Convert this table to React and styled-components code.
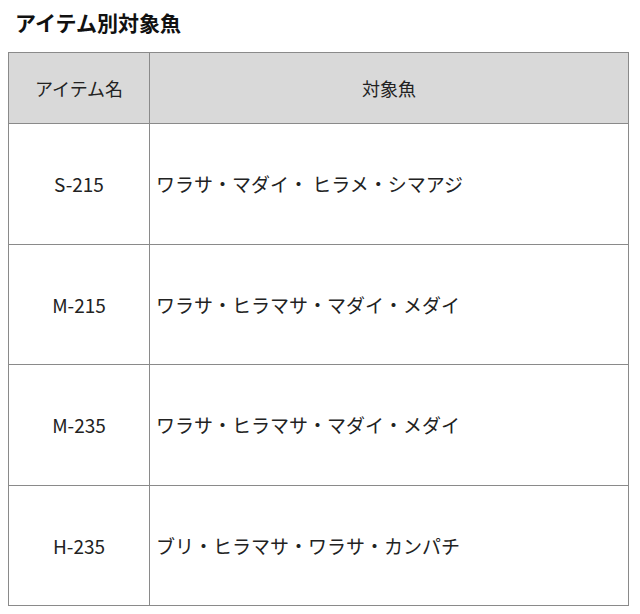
import React from "react";
import styled, { createGlobalStyle } from "styled-components";

const GlobalStyle = createGlobalStyle`
  body {
    margin: 0;
    background: #ffffff;
    font-family: "Noto Sans CJK JP", "Noto Sans", sans-serif;
    color: #222222;
  }
`;

const Page = styled.div`
  width: 640px;
  padding: 7px 11px 0 8px;
  box-sizing: border-box;
`;

const Title = styled.h2`
  margin: 0 0 15px 7px;
  font-size: 21px;
  font-weight: 700;
  line-height: 30px;
  color: #111111;
`;

const Table = styled.table`
  width: 621px;
  border-collapse: collapse;
  table-layout: fixed;
  border: 1px solid #8a8a8a;
`;

const HeadCell = styled.th`
  height: 70px;
  padding: 0;
  background: #d9d9d9;
  border: 1px solid #8a8a8a;
  font-size: 18px;
  font-weight: 400;
  text-align: center;
  color: #222222;
`;

const Cell = styled.td`
  height: 119.5px;
  padding: ${(p) => (p.$left ? "0 0 0 6px" : "0")};
  border: 1px solid #8a8a8a;
  font-size: 19px;
  text-align: ${(p) => (p.$left ? "left" : "center")};
  vertical-align: middle;
  white-space: nowrap;
`;

const rows = [
  { item: "S-215", fish: "ワラサ・マダイ・ ヒラメ・シマアジ" },
  { item: "M-215", fish: "ワラサ・ヒラマサ・マダイ・メダイ" },
  { item: "M-235", fish: "ワラサ・ヒラマサ・マダイ・メダイ" },
  { item: "H-235", fish: "ブリ・ヒラマサ・ワラサ・カンパチ" },
];

export default function App() {
  return (
    <Page>
      <GlobalStyle />
      <Title>アイテム別対象魚</Title>
      <Table>
        <colgroup>
          <col style={{ width: 141 }} />
          <col />
        </colgroup>
        <thead>
          <tr>
            <HeadCell>アイテム名</HeadCell>
            <HeadCell>対象魚</HeadCell>
          </tr>
        </thead>
        <tbody>
          {rows.map((r) => (
            <tr key={r.item}>
              <Cell>{r.item}</Cell>
              <Cell $left>{r.fish}</Cell>
            </tr>
          ))}
        </tbody>
      </Table>
    </Page>
  );
}
